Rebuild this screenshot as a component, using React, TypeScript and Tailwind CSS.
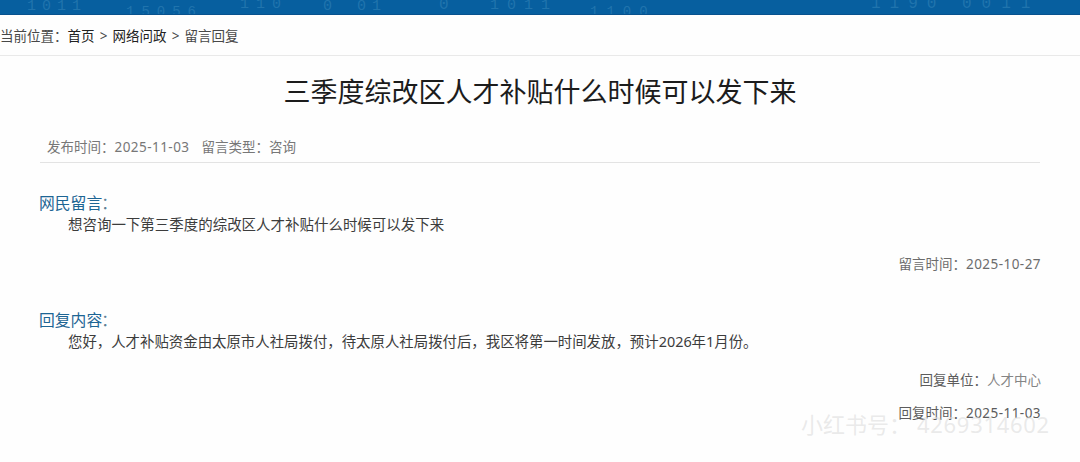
import type { ReactNode } from 'react';

const bannerDigits = [
  { text: '1011', className: 'left-[27px] -top-[1px] text-[15px] tracking-[6px]' },
  { text: '15056', className: 'left-[126px] top-[5px] text-[14px] tracking-[7px]' },
  { text: '110', className: 'left-[240px] -top-[3px] text-[15px] tracking-[7px]' },
  { text: '0', className: 'left-[323px] -top-[1px] text-[15px]' },
  { text: '01', className: 'left-[357px] -top-[1px] text-[15px] tracking-[6px]' },
  { text: '0', className: 'left-[439px] -top-[2px] text-[16px]' },
  { text: '1011', className: 'left-[490px] -top-[2px] text-[15px] tracking-[8px]' },
  { text: '1100', className: 'left-[590px] top-[5px] text-[14px] tracking-[8px]' },
  { text: '1190', className: 'left-[871px] -top-[3px] text-[16px] tracking-[9px]' },
  { text: '0011', className: 'left-[962px] -top-[3px] text-[16px] tracking-[10px]' },
];

function Banner() {
  return (
    <div className="relative h-[15px] overflow-hidden border-b border-[#08528e] bg-[#075f9f]">
      {bannerDigits.map((item) => (
        <span
          key={item.className}
          className={`absolute font-['Liberation_Mono',monospace] leading-[15px] text-[#2b7db4] opacity-70 ${item.className}`}
        >
          {item.text}
        </span>
      ))}
    </div>
  );
}

function DateText({ children }: { children: ReactNode }) {
  return <span className="tracking-[0.45px]">{children}</span>;
}

function Message({ title, className, children }: { title: string; className: string; children: ReactNode }) {
  return (
    <section className={className}>
      <h2 className="-ml-px text-[15.8px] leading-[22px] text-[#1d6594]">
        {title}<span className="-ml-px text-[#5d7f95]">：</span>
      </h2>
      <p className="-mt-px pl-[28px] leading-[23px] text-[#3c3c3c]">{children}</p>
    </section>
  );
}

export default function App() {
  return (
    <div
      lang="zh-CN"
      className="relative h-[462px] w-[1080px] overflow-hidden bg-[#fefefe] font-['Noto_Sans','Noto_Sans_CJK_SC',sans-serif] whitespace-nowrap"
    >
      <Banner />
      <nav className="flex h-[41px] items-center border-b border-[#e9e9e9] pt-[2px] text-[13.5px] text-[#484848]">
        <span>当前位置：</span>
        <a className="text-[#222]">首页</a>
        <span className="w-[18px] text-center">&gt;</span>
        <a className="text-[#222]">网络问政</a>
        <span className="w-[18px] text-center">&gt;</span>
        <span>留言回复</span>
      </nav>
      <main className="px-10">
        <h1 className="pt-[16px] text-center text-[27px] leading-[40px] text-[#1c1c1c]">
          三季度综改区人才补贴什么时候可以发下来
        </h1>
        <div className="mt-[20px] flex h-[31px] items-center gap-3 border-b border-[#e3e3e3] pl-[7px] text-[13.5px] text-[#777]">
          <span>发布时间：<DateText>2025-11-03</DateText></span>
          <span>留言类型：咨询</span>
        </div>
        <Message title="网民留言" className="mt-[29px] text-[14.47px]">
          想咨询一下第三季度的综改区人才补贴什么时候可以发下来
        </Message>
        <div className="-mr-px mt-[17px] text-right text-[13.5px] leading-[22px] text-[#6c6c6c]">
          留言时间：<DateText>2025-10-27</DateText>
        </div>
        <Message title="回复内容" className="mt-[34px] text-[14.42px]">
          您好，人才补贴资金由太原市人社局拨付，待太原人社局拨付后，我区将第一时间发放，预计2026年1月份。
        </Message>
        <div className="-mr-px mt-[11px] text-right text-[13.5px] leading-[33px] text-[#5c5c5c]">
          <div>回复单位：<span className="text-[#858585]">人才中心</span></div>
          <div>回复时间：<DateText>2025-11-03</DateText></div>
        </div>
      </main>
      <div className="absolute top-[408px] left-[801px] flex text-[22px] leading-[32px] text-[#dedede]/65">
        <span>小红书号：</span>
        <span className="ml-[6px] tracking-[0.7px]">4269314602</span>
      </div>
    </div>
  );
}
